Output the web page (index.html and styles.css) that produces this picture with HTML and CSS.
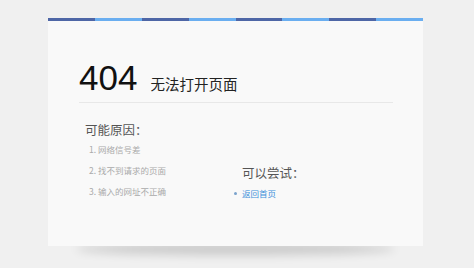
FILE: index.html
```html
<!DOCTYPE html>
<html lang="zh">
<head>
<meta charset="utf-8">
<link rel="stylesheet" href="styles.css">
</head>
<body>
<div class="card">
  <div class="stripe">
    <span class="d"></span><span class="l"></span><span class="d"></span><span class="l"></span><span class="d"></span><span class="l"></span><span class="d"></span><span class="l"></span>
  </div>
  <div class="content">
    <div class="head">
      <span class="code">404</span>
      <span class="title">无法打开页面</span>
    </div>
    <div class="body">
      <div class="reasons">
        <div class="h">可能原因：</div>
        <ol>
          <li>1. 网络信号差</li>
          <li>2. 找不到请求的页面</li>
          <li>3. 输入的网址不正确</li>
        </ol>
      </div>
      <div class="try">
        <div class="h">可以尝试：</div>
        <ul>
          <li><a href="#">返回首页</a></li>
        </ul>
      </div>
    </div>
  </div>
</div>
</body>
</html>
```
FILE: styles.css
```css
html, body { margin: 0; padding: 0; }
body {
  background: #f0f0f0;
  font-family: "Noto Sans CJK SC", "Liberation Sans", sans-serif;
  width: 474px;
  height: 268px;
  overflow: hidden;
}
.card {
  position: relative;
  margin: 18px 0 0 48px;
  width: 375px;
  height: 228px;
  background: #f9f9f9;
}
.card::after {
  content: "";
  position: absolute;
  left: 28px;
  right: 28px;
  bottom: 0;
  height: 12px;
  border-radius: 50%;
  box-shadow: 0 9px 10px rgba(0,0,0,0.16);
  z-index: -1;
}
.stripe { display: flex; height: 3px; }
.stripe span { flex: 1; }
.stripe .d { background: #4e66a6; }
.stripe .l { background: #6aaef0; }
.content { padding: 0 30px 0 31px; }
.head {
  display: flex;
  align-items: baseline;
  margin-top: 38px;
  padding-bottom: 5px;
  border-bottom: 1px solid #e8e8e8;
}
.code {
  font-family: "Liberation Sans", Arial, sans-serif;
  font-weight: normal;
  font-size: 35px;
  line-height: 38px;
  color: #111;
}
.title {
  margin-left: 13px;
  font-size: 14.5px;
  color: #222;
}
.body { display: flex; padding-left: 6px; margin-top: 18px; }
.h { font-size: 12.5px; color: #555; line-height: 18px; }
ol, ul { list-style: none; margin: 0; padding: 0; }
.reasons { width: 157px; }
.reasons ol { margin-top: 0; padding-left: 4px; }
.reasons li { font-size: 8.5px; color: #aaa; line-height: 21px; }
.try { margin-top: 43px; }
.try ul { margin-top: 5px; margin-left: -8px; }
.try li { font-size: 8.5px; line-height: 12px; display: flex; align-items: center; }
.try li::before {
  content: "";
  width: 3px; height: 3px;
  border-radius: 50%;
  background: #7aa2cc;
  margin-right: 5px;
}
.try a { color: #3b8fd9; text-decoration: none; }
```
